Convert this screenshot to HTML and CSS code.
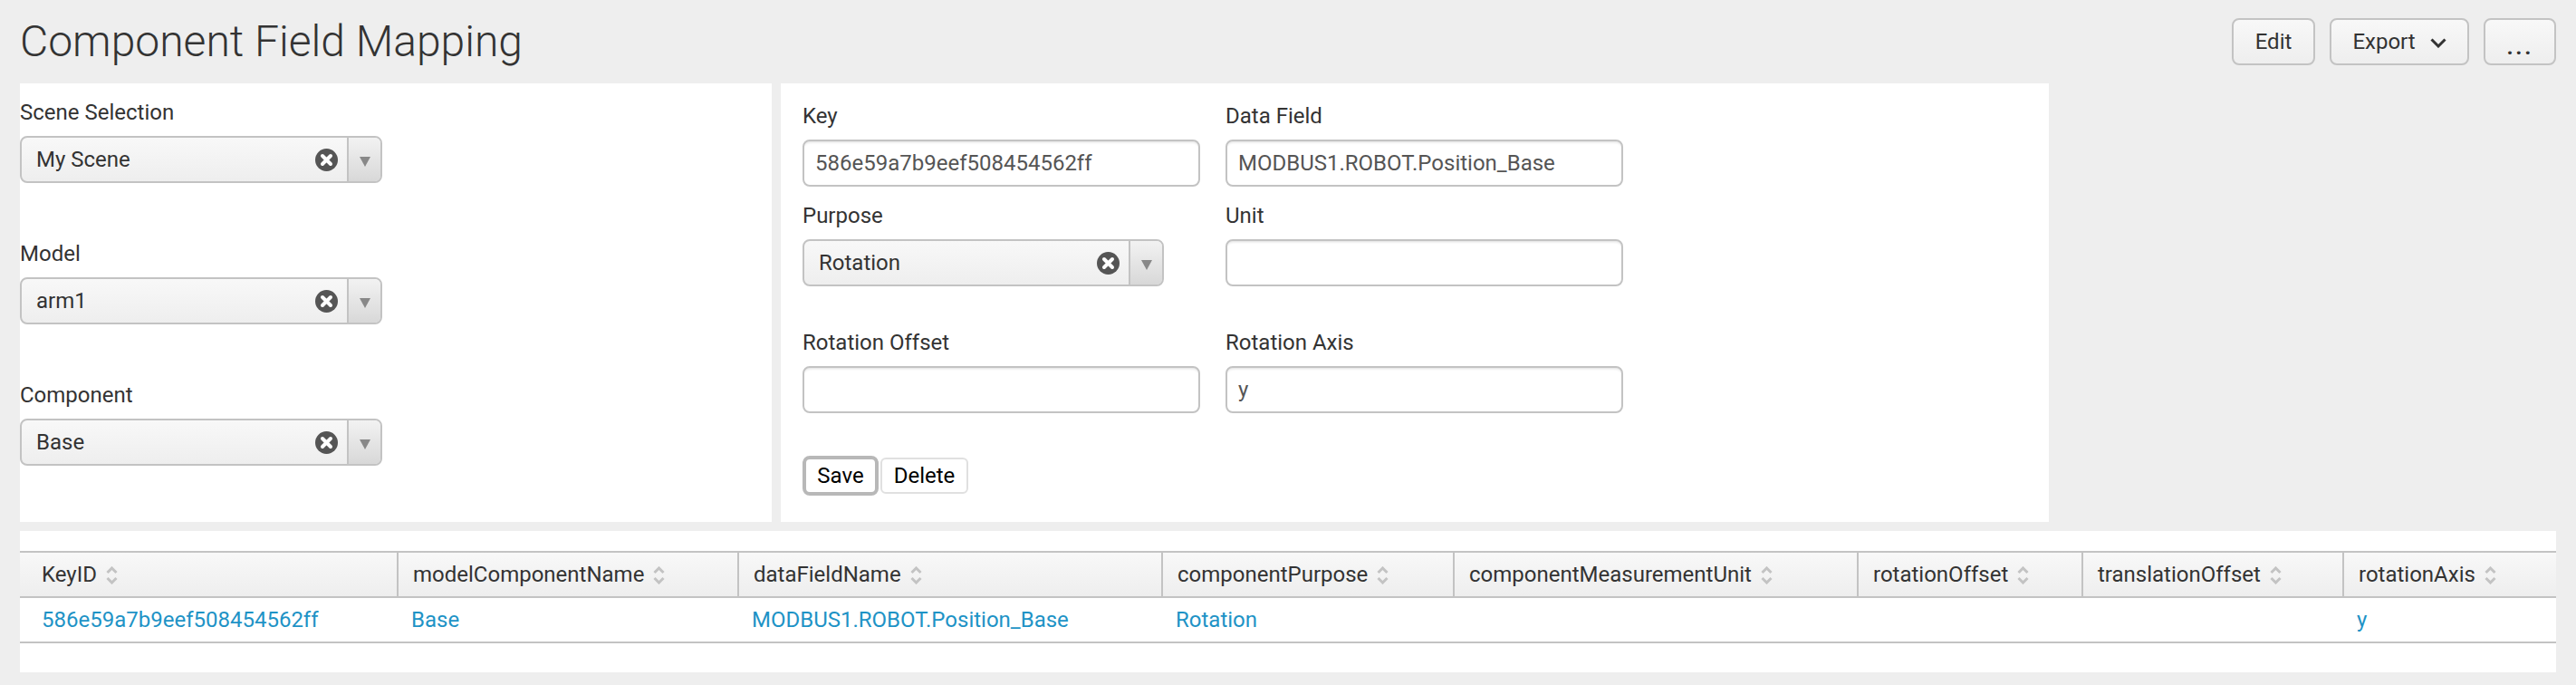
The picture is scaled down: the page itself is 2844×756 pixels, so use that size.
FILE: index.html
```html
<!DOCTYPE html>
<html>
<head>
	<meta charset="utf-8">
	<title>Component Field Mapping</title>
	<link rel="stylesheet" href="styles.css">
</head>
<body>
	<svg class="defs" width="0" height="0">
		<symbol id="icon-clear" viewBox="0 0 25 25">
			<circle cx="12.5" cy="12.5" r="12.5" fill="#555"/>
			<path d="M8 8l9 9M17 8l-9 9" stroke="#fff" stroke-width="4" stroke-linecap="round" fill="none"/>
		</symbol>
		<symbol id="icon-sort" viewBox="0 0 13 20">
			<path d="M1.5 7l5-5 5 5M1.5 13l5 5 5-5" stroke="#c3c3c3" stroke-width="3" fill="none"/>
		</symbol>
	</svg>

	<div class="header">
		<h1>Component Field Mapping</h1>
		<div class="actions">
			<button class="btn btn-edit">Edit</button>
			<button class="btn btn-export">Export
				<svg class="chevron" width="18" height="11" viewBox="0 0 18 11"><path d="M1.5 1.5L9 9l7.5-7.5" stroke="#333" stroke-width="3" fill="none"/></svg>
			</button>
			<button class="btn btn-more">...</button>
		</div>
	</div>

	<div class="panels">
		<div class="panel panel-left">
			<div class="group">
				<label>Scene Selection</label>
				<div class="select">
					<span class="select-value">My Scene</span>
					<svg class="clear"><use href="#icon-clear"/></svg>
					<span class="select-toggle"><i class="arrow"></i></span>
				</div>
			</div>
			<div class="group">
				<label>Model</label>
				<div class="select">
					<span class="select-value">arm1</span>
					<svg class="clear"><use href="#icon-clear"/></svg>
					<span class="select-toggle"><i class="arrow"></i></span>
				</div>
			</div>
			<div class="group">
				<label>Component</label>
				<div class="select">
					<span class="select-value">Base</span>
					<svg class="clear"><use href="#icon-clear"/></svg>
					<span class="select-toggle"><i class="arrow"></i></span>
				</div>
			</div>
		</div>

		<div class="panel panel-form">
			<div class="form-row row-first">
				<div class="field">
					<label>Key</label>
					<input class="text-input" type="text" value="586e59a7b9eef508454562ff">
				</div>
				<div class="field">
					<label>Data Field</label>
					<input class="text-input" type="text" value="MODBUS1.ROBOT.Position_Base">
				</div>
			</div>
			<div class="form-row row-second">
				<div class="field">
					<label>Purpose</label>
					<div class="select select-short">
						<span class="select-value">Rotation</span>
						<svg class="clear"><use href="#icon-clear"/></svg>
						<span class="select-toggle"><i class="arrow"></i></span>
					</div>
				</div>
				<div class="field">
					<label>Unit</label>
					<input class="text-input" type="text">
				</div>
			</div>
			<div class="form-row row-third">
				<div class="field">
					<label>Rotation Offset</label>
					<input class="text-input" type="text">
				</div>
				<div class="field">
					<label>Rotation Axis</label>
					<input class="text-input" type="text" value="y">
				</div>
			</div>
			<div class="form-buttons">
				<button class="plain-btn plain-btn-focus">Save</button>
				<button class="plain-btn">Delete</button>
			</div>
		</div>
	</div>

	<div class="table-panel">
		<table class="results">
			<thead>
				<tr>
					<th>KeyID <svg class="sort"><use href="#icon-sort"/></svg></th>
					<th>modelComponentName <svg class="sort"><use href="#icon-sort"/></svg></th>
					<th>dataFieldName <svg class="sort"><use href="#icon-sort"/></svg></th>
					<th>componentPurpose <svg class="sort"><use href="#icon-sort"/></svg></th>
					<th>componentMeasurementUnit <svg class="sort"><use href="#icon-sort"/></svg></th>
					<th>rotationOffset <svg class="sort"><use href="#icon-sort"/></svg></th>
					<th>translationOffset <svg class="sort"><use href="#icon-sort"/></svg></th>
					<th>rotationAxis <svg class="sort"><use href="#icon-sort"/></svg></th>
				</tr>
			</thead>
			<tbody>
				<tr>
					<td>586e59a7b9eef508454562ff</td>
					<td>Base</td>
					<td>MODBUS1.ROBOT.Position_Base</td>
					<td>Rotation</td>
					<td></td>
					<td></td>
					<td></td>
					<td>y</td>
				</tr>
			</tbody>
		</table>
	</div>
</body>
</html>
```
FILE: styles.css
```css
*
{
	box-sizing: border-box;
	margin: 0;
	padding: 0;
}
body
{
	background: #eee;
	color: #333;
	font-family: Roboto, "Liberation Sans", sans-serif;
	font-size: 24px;
}
.defs
{
	display: block;
	height: 0;
}

/* top bar */
.header
{
	display: flex;
	justify-content: space-between;
	height: 92px;
	padding: 20px 22px 0;
}
h1
{
	font-size: 48px;
	font-weight: 300;
	line-height: 52px;
}
.actions
{
	display: flex;
	gap: 16px;
}
.btn
{
	height: 52px;
	border: 2px solid #c3c3c3;
	border-radius: 8px;
	background: linear-gradient(#f8f8f8, #eee);
	color: #333;
	font: inherit;
}
.btn-edit
{
	width: 92px;
}
.btn-export
{
	width: 154px;
}
.btn-more
{
	width: 80px;
	padding-top: 8px;
	font-size: 28px;
	font-weight: 500;
	letter-spacing: 2px;
}
.chevron
{
	margin-left: 10px;
	vertical-align: 1px;
}

/* panels */
.panels
{
	display: flex;
	gap: 10px;
	height: 484px;
	padding-left: 22px;
}
.panel
{
	background: #fff;
}
.panel-left
{
	width: 830px;
	padding-top: 14px;
}
.panel-form
{
	width: 1400px;
	padding: 18px 0 0 24px;
}
label
{
	display: block;
	height: 36px;
	margin-bottom: 8px;
	line-height: 36px;
}
.group
{
	margin-bottom: 60px;
}
.select
{
	display: flex;
	align-items: center;
	width: 400px;
	height: 52px;
	border: 2px solid #c3c3c3;
	border-radius: 8px;
	background: linear-gradient(#f8f8f8, #eee);
}
.select-short
{
	width: 399px;
}
.select-value
{
	flex: 1;
	padding-left: 16px;
}
.clear
{
	width: 25px;
	height: 25px;
	margin-right: 10px;
}
.select-toggle
{
	display: flex;
	align-items: center;
	justify-content: center;
	width: 37px;
	height: 48px;
	border-left: 2px solid #c3c3c3;
	border-radius: 0 6px 6px 0;
	background: linear-gradient(#f2f2f2, #d8d8d8);
}
.arrow
{
	width: 0;
	height: 0;
	margin-top: 4px;
	border-top: 11px solid #888;
	border-left: 6px solid transparent;
	border-right: 6px solid transparent;
}

/* form */
.form-row
{
	display: grid;
	grid-template-columns: 439px 439px;
	column-gap: 28px;
}
.row-first
{
	margin-bottom: 14px;
}
.row-second
{
	margin-bottom: 44px;
}
.row-third
{
	margin-bottom: 47px;
}
.text-input
{
	display: block;
	width: 100%;
	height: 52px;
	padding: 0 12px;
	border: 2px solid #c3c3c3;
	border-radius: 8px;
	background: #fff;
	box-shadow: inset 0 3px 3px -2px #ddd;
	color: #555;
	font: inherit;
}
.form-buttons
{
	display: flex;
	align-items: center;
	gap: 2px;
}
.plain-btn
{
	width: 97px;
	height: 40px;
	border: 2px solid #e0e0e0;
	border-radius: 6px;
	background: #fff;
	color: #000;
	font: inherit;
}
.plain-btn-focus
{
	width: 84px;
	height: 44px;
	border: 4px solid #b8b8b8;
	border-radius: 8px;
}

/* table */
.table-panel
{
	height: 156px;
	margin: 10px 22px 0;
	padding-top: 22px;
	background: #fff;
}
.results
{
	width: 100%;
	border-spacing: 0;
	table-layout: fixed;
}
.results th
{
	height: 52px;
	padding-left: 16px;
	border-top: 2px solid #c3c3c3;
	border-bottom: 2px solid #c3c3c3;
	border-left: 2px solid #c3c3c3;
	background: linear-gradient(#f8f8f8, #eee);
	font-weight: 400;
	text-align: left;
	white-space: nowrap;
}
.results td
{
	height: 50px;
	padding-left: 16px;
	border-bottom: 2px solid #c3c3c3;
	color: #1e93c6;
}
.results th:first-child
{
	padding-left: 24px;
	border-left: 0;
}
.results td:first-child
{
	padding-left: 24px;
}
.results th:nth-child(1) { width: 416px; }
.results th:nth-child(2) { width: 376px; }
.results th:nth-child(3) { width: 468px; }
.results th:nth-child(4) { width: 322px; }
.results th:nth-child(5) { width: 446px; }
.results th:nth-child(6) { width: 248px; }
.results th:nth-child(7) { width: 288px; }
.results th:nth-child(8) { width: 236px; }
.sort
{
	width: 13px;
	height: 20px;
	margin-left: 4px;
	vertical-align: -3px;
}
```
